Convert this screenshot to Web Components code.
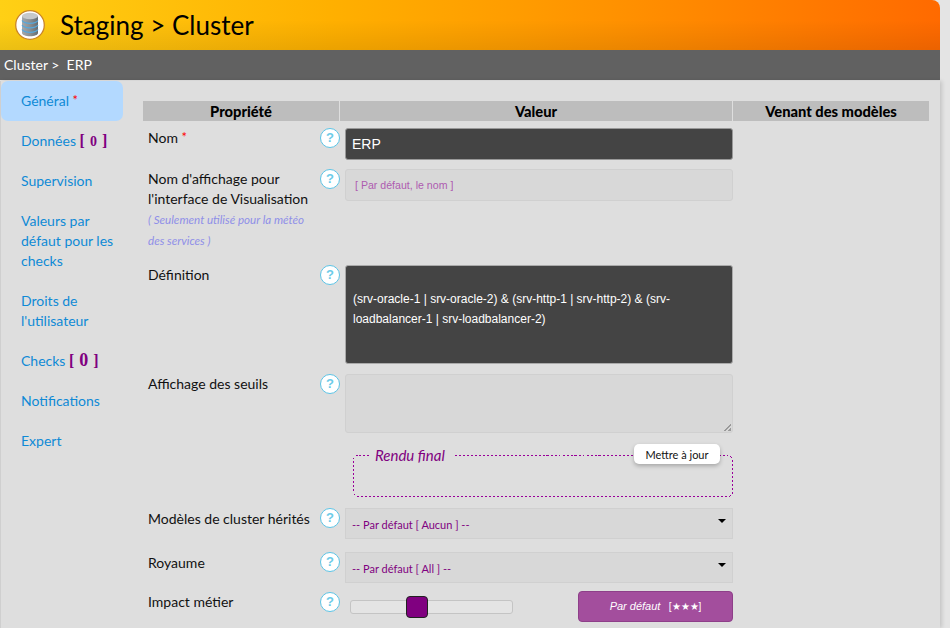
<!DOCTYPE html>
<html lang="fr">
<head>
<meta charset="utf-8">
<title>Staging > Cluster</title>
<style>
  html, body { margin: 0; height: 628px; overflow: hidden; }
  body {
    background: #e4e4e4;
    color: #111;
    font: 15px/20px Lato, "Liberation Sans", sans-serif;
  }
</style>
</head>
<body>
<app-shell>
  <app-header slot="header">Staging &gt; Cluster</app-header>
  <app-crumb slot="crumb">Cluster &gt;&nbsp; ERP</app-crumb>

  <side-nav slot="nav">
    <nav-item active>Général <span style="color:#f00;font-size:13px;line-height:0;vertical-align:1px">*</span></nav-item>
    <nav-item>Données <nav-count small>0</nav-count></nav-item>
    <nav-item>Supervision</nav-item>
    <nav-item>Valeurs par défaut pour les checks</nav-item>
    <nav-item>Droits de l'utilisateur</nav-item>
    <nav-item>Checks <nav-count>0</nav-count></nav-item>
    <nav-item>Notifications</nav-item>
    <nav-item>Expert</nav-item>
  </side-nav>

  <prop-table slot="main">
    <prop-row style="--row-top:7px" required label="Nom">
      <text-field dark height="32">ERP</text-field>
    </prop-row>
    <prop-row style="--row-top:9px" label="Nom d'affichage pour l'interface de Visualisation" note="( Seulement utilisé pour la météo des services )">
      <text-field height="32" placeholder>[ Par défaut, le nom ]</text-field>
    </prop-row>
    <prop-row style="--row-top:14px" label="Définition">
      <area-field dark height="99">(srv-oracle-1 | srv-oracle-2) &amp; (srv-http-1 | srv-http-2) &amp; (srv-loadbalancer-1 | srv-loadbalancer-2)</area-field>
    </prop-row>
    <prop-row style="--row-top:10px" label="Affichage des seuils">
      <area-field height="59"></area-field>
    </prop-row>
    <prop-row style="--row-top:22px" plain>
      <final-render></final-render>
    </prop-row>
    <prop-row style="--row-top:11px;--text-top:1px" label="Modèles de cluster hérités">
      <select-field>-- Par défaut [ Aucun ] --</select-field>
    </prop-row>
    <prop-row style="--row-top:13px;--text-top:1px" label="Royaume">
      <select-field>-- Par défaut [ All ] --</select-field>
    </prop-row>
    <prop-row style="--row-top:8px;--label-top:1px" label="Impact métier">
      <impact-field></impact-field>
    </prop-row>
  </prop-table>
</app-shell>

<script>
function define(name, css, html) {
  customElements.define(name, class extends HTMLElement {
    constructor() {
      super();
      this.root = this.attachShadow({ mode: 'open' });
    }

    connectedCallback() {
      this.root.innerHTML = `<style>${css}</style>${typeof html === 'function' ? html(this) : html}`;
      if (this.hasAttribute('height')) this.style.height = this.getAttribute('height') + 'px';
    }
  });
}

define('app-shell', `
  :host { display: block; width: 940px; height: 628px; }
  .body {
    display: flex;
    height: 547px;
    margin-top: 1px;
    box-shadow: 2px 0 4px rgba(0, 0, 0, .14);
    border-left: 1px solid #cfcfcf;
    background: #dedede;
  }
`, `
  <slot name="header"></slot>
  <slot name="crumb"></slot>
  <div class="body">
    <slot name="nav"></slot>
    <slot name="main"></slot>
  </div>
`);

define('app-header', `
  :host {
    display: flex;
    align-items: center;
    gap: 15px;
    height: 50px;
    padding-left: 15px;
    box-sizing: border-box;
    border-top-right-radius: 8px;
    color: #000;
    font: 26px/50px Lato, sans-serif;
    background:
      linear-gradient(to bottom, rgba(0, 0, 0, 0) 40%, rgba(0, 0, 0, .08)),
      linear-gradient(to right, #ffd015, #ffb000 35%, #ff9200 65%, #ff6a00);
  }
  svg { flex: none; }
`, `
  <svg width="30" height="30" viewBox="0 0 30 30">
    <defs>
      <linearGradient id="can">
        <stop offset="0" stop-color="#a4a8ac"/>
        <stop offset=".5" stop-color="#8a8f93"/>
        <stop offset="1" stop-color="#676c70"/>
      </linearGradient>
    </defs>
    <circle cx="15" cy="15" r="14.3" fill="#fff" stroke="#c9852b" stroke-width="1.3"/>
    <path d="M7 6v17c0 1.9 3.6 3.3 8 3.3s8-1.4 8-3.3V6z" fill="url(#can)"/>
    <ellipse cx="15" cy="6" rx="8" ry="3.2" fill="#c6c8ca"/>
    <path d="M7 10.5c1 1.8 4 2.8 8 2.8s7-1 8-2.8M7 15c1 1.8 4 2.8 8 2.8s7-1 8-2.8M7 19.5c1 1.8 4 2.8 8 2.8s7-1 8-2.8" fill="none" stroke="#55a8dc" stroke-width="1.3"/>
  </svg>
  <slot></slot>
`);

define('app-crumb', `
  :host {
    display: block;
    height: 30px;
    padding-left: 4px;
    background: #616161;
    color: #fff;
    font: 14px/30px Lato, sans-serif;
  }
`, `<slot></slot>`);

define('side-nav', `
  :host { display: block; flex: none; width: 122px; }
`, `<slot></slot>`);

define('nav-item', `
  :host {
    display: block;
    padding: 10px 6px 10px 20px;
    color: #0f8ad6;
    font: 14px/20px Lato, sans-serif;
  }
  :host([active]) { background: #b3d9ff; border-radius: 7px; }
`, `<slot></slot>`);

define('nav-count', `
  :host {
    color: #800080;
    font: bold 16px/20px "Liberation Serif", serif;
    line-height: 0;
    white-space: pre;
  }
  .n { font-size: 18px; margin: 0 1px; }
  :host([small]) .n { font-size: 14px; }
`, `[ <span class="n"><slot></slot></span> ]`);

define('prop-table', `
  :host { display: block; flex: none; width: 787px; padding: 20px 0 0 20px; overflow: hidden; }
  .head {
    display: grid;
    grid-template-columns: 196px 392px 196px;
    column-gap: 1px;
    height: 20px;
    color: #000;
    font: 900 14.7px/20px Lato, sans-serif;
    text-align: center;
  }
  .head div { background: #bdbdbd; }
`, `
  <div class="head">
    <div>Propriété</div><div>Valeur</div><div>Venant des modèles</div>
  </div>
  <slot></slot>
`);

define('prop-row', `
  :host {
    display: grid;
    grid-template-columns: 197px 393px;
    margin-top: var(--row-top, 9px);
  }
  .label {
    position: relative;
    margin-top: var(--label-top, 0);
    padding: 0 30px 0 5px;
    font: 14px/20px Lato, sans-serif;
  }
  .text { display: block; padding-top: var(--text-top, 0); }
  .req { color: #f00; font-size: 13px; line-height: 0; vertical-align: 1px; }
  .note {
    display: block;
    color: #8f8fe8;
    font: italic 11.6px/21px Lato, sans-serif;
  }
  help-icon { position: absolute; top: 0; right: 0; }
  .value { padding-left: 5px; min-width: 0; }
`, host => {
  if (host.hasAttribute('plain')) return `<div></div><div class="value"><slot></slot></div>`;
  const req = host.hasAttribute('required') ? ' <span class="req">*</span>' : '';
  const note = host.getAttribute('note');
  return `
    <div class="label">
      <help-icon></help-icon>
      <span class="text">${host.getAttribute('label')}${req}</span>
      ${note ? `<span class="note">${note}</span>` : ''}
    </div>
    <div class="value"><slot></slot></div>
  `;
});

define('help-icon', `
  :host {
    display: block;
    box-sizing: border-box;
    width: 20px;
    height: 20px;
    border: 1px solid #5cc4e6;
    border-radius: 50%;
    background: #fff;
    color: #6ccbe8;
    font: bold 13px/18px "Liberation Sans", sans-serif;
    text-align: center;
  }
`, `?`);

define('text-field', `
  :host {
    display: block;
    box-sizing: border-box;
    width: 388px;
    padding: 0 6px;
    border: 1px solid #d0d0d0;
    border-radius: 3px;
    background: #d8d8d8;
    font: 14px/30px "Liberation Sans", sans-serif;
    color: #fff;
  }
  :host([dark]) { background: #444; border-color: #999; }
  :host([placeholder]) { padding-left: 9px; color: #ae5bb0; font-size: 10.6px; }
`, `<slot></slot>`);

define('area-field', `
  :host {
    display: flex;
    align-items: center;
    box-sizing: border-box;
    width: 388px;
    padding: 0 7px 12px;
    border: 1px solid #d0d0d0;
    border-radius: 3px;
    background: #d8d8d8;
    color: #fff;
    font: 12px/20px "Liberation Sans", sans-serif;
    position: relative;
  }
  :host([dark]) { background: #444; border-color: #aaa; }
  :host(:not([dark]))::after {
    content: '';
    position: absolute;
    right: 1px;
    bottom: 1px;
    width: 7px;
    height: 7px;
    background: linear-gradient(135deg, transparent 50%, #999 50%, #999 62%, transparent 62%, transparent 75%, #999 75%);
  }
`, `<slot></slot>`);

define('final-render', `
  :host { display: block; position: relative; width: 380px; height: 42px; margin-left: 8px; }
  svg { display: block; }
  .title {
    position: absolute;
    top: -10px;
    left: 16px;
    padding: 0 8px 0 6px;
    background: #dedede;
    color: #800080;
    font: italic 15px/20px Lato, sans-serif;
  }
  .btn {
    position: absolute;
    top: -11px;
    right: 13px;
    width: 86px;
    height: 20px;
    border-radius: 5px;
    background: #fff;
    box-shadow: 0 2px 4px rgba(0, 0, 0, .25);
    color: #111;
    font: 11px/22px Lato, sans-serif;
    text-align: center;
  }
`, `
  <svg width="380" height="42">
    <rect x=".5" y=".5" width="379" height="41" rx="5" fill="none" stroke="#990099" stroke-dasharray="2 2" shape-rendering="crispEdges"/>
  </svg>
  <span class="title">Rendu final</span><span class="btn">Mettre à jour</span>
`);

define('select-field', `
  :host {
    display: block;
    position: relative;
    box-sizing: border-box;
    width: 388px;
    height: 31px;
    padding-left: 6px;
    border: 1px solid #d0d0d0;
    background: #d8d8d8;
    color: #800080;
    font: 11px/31px Lato, sans-serif;
  }
  :host::after {
    content: '';
    position: absolute;
    top: 10px;
    right: 6px;
    border: 4px solid transparent;
    border-top: 4px solid #000;
  }
`, `<slot></slot>`);

define('impact-field', `
  :host { display: flex; justify-content: space-between; align-items: flex-start; width: 388px; }
  .track {
    position: relative;
    box-sizing: border-box;
    width: 163px;
    height: 14px;
    margin: 9px 0 0 5px;
    border: 1px solid #c4c4c4;
    border-radius: 3px;
    background: #e4e4e4;
  }
  .handle {
    position: absolute;
    top: -5px;
    left: 55px;
    box-sizing: border-box;
    width: 22px;
    height: 22px;
    border: 1px solid #222;
    border-radius: 4px;
    background: #800080;
  }
  .btn {
    box-sizing: border-box;
    width: 155px;
    height: 31px;
    border: 1px solid #8e3f89;
    border-radius: 4px;
    background: #a34e9d;
    color: #fff;
    font: 10px/29px "Liberation Sans", sans-serif;
    text-align: center;
    white-space: pre;
  }
  .btn i { font-size: 11px; }
`, `
  <div class="track"><div class="handle"></div></div>
  <div class="btn"><i>Par défaut</i>   [★★★]</div>
`);
</script>
</body>
</html>
